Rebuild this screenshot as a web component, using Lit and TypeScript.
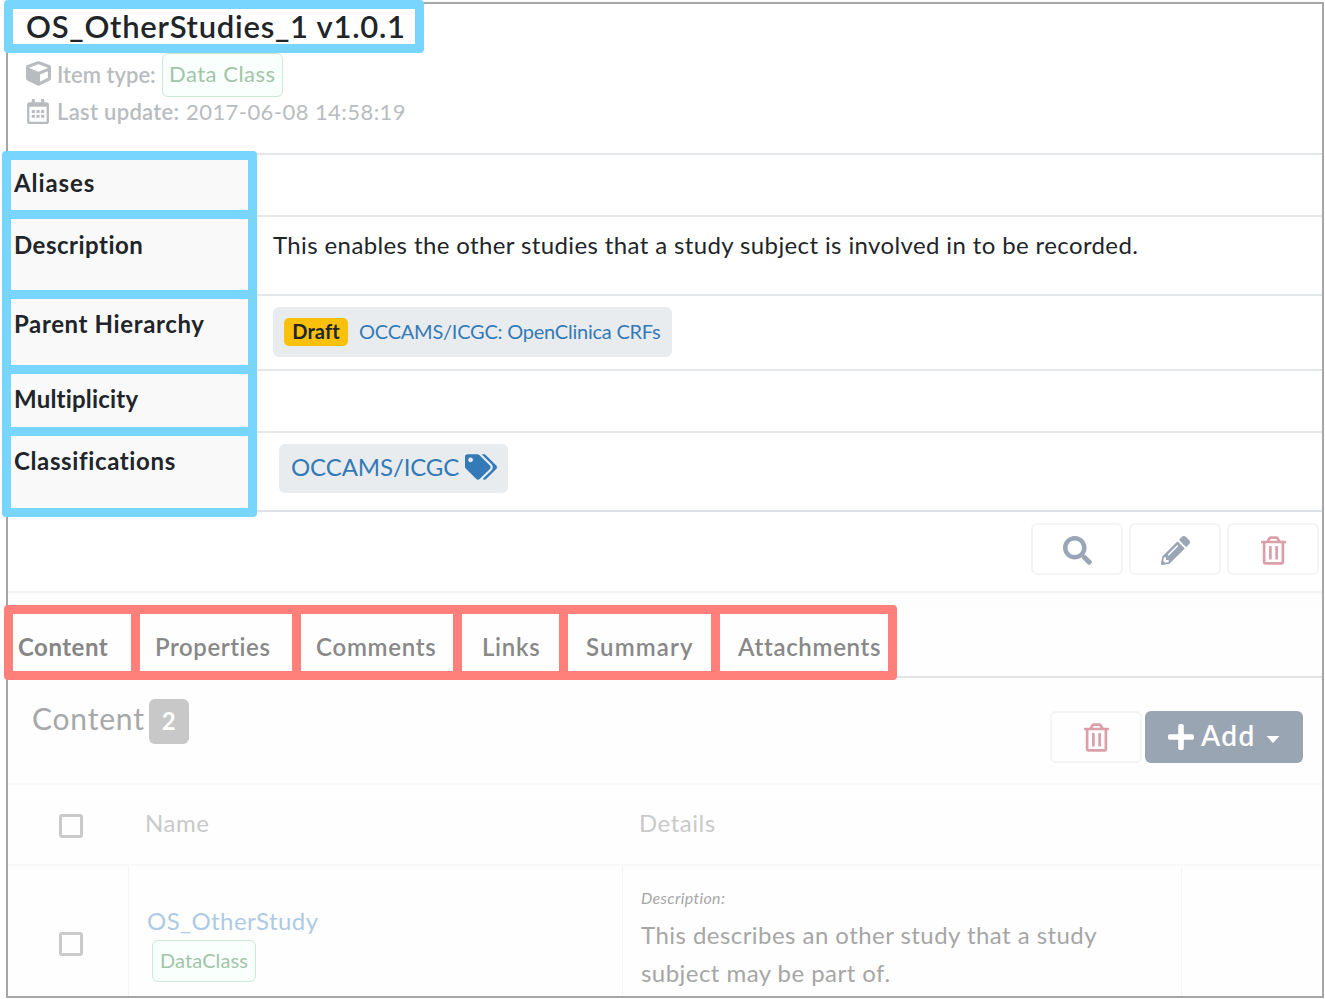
import { LitElement, html, css, svg } from "lit";
import { customElement, property } from "lit/decorators.js";

const ICONS: Record<string, { box: string; d: string }> = {
  search: { box: "0 0 512 512", d: "M505 442.7L405.3 343c-4.5-4.5-10.6-7-17-7H372c27.6-35.3 44-79.7 44-128C416 93.1 322.9 0 208 0S0 93.1 0 208s93.1 208 208 208c48.3 0 92.7-16.4 128-44v16.3c0 6.4 2.5 12.5 7 17l99.7 99.7c9.4 9.4 24.6 9.4 33.9 0l28.3-28.3c9.4-9.4 9.4-24.6.1-34zM208 336c-70.7 0-128-57.2-128-128 0-70.7 57.2-128 128-128 70.7 0 128 57.2 128 128 0 70.7-57.2 128-128 128z" },
  pencil: { box: "0 0 512 512", d: "M497.9 142.1l-46.1 46.1c-4.7 4.7-12.3 4.7-17 0l-111-111c-4.7-4.7-4.7-12.3 0-17l46.1-46.1c18.7-18.7 49.1-18.7 67.9 0l60.1 60.1c18.8 18.7 18.8 49.1 0 67.9zM284.2 99.8L21.6 362.4.4 483.9c-2.9 16.4 11.4 30.6 27.8 27.8l121.5-21.3 262.6-262.6c4.7-4.7 4.7-12.3 0-17l-111-111c-4.8-4.7-12.4-4.7-17.1 0zM124.1 339.9c-5.5-5.5-5.5-14.3 0-19.8l154-154c5.5-5.5 14.3-5.5 19.8 0s5.5 14.3 0 19.8l-154 154c-5.5 5.5-14.3 5.5-19.8 0zM88 424h48v36.3l-64.5 11.3-31.1-31.1L51.7 376H88v48z" },
  cube: { box: "0 0 512 512", d: "M239.1 6.3l-208 78c-18.7 7-31.1 25-31.1 45v225.1c0 18.2 10.3 34.8 26.5 42.9l208 104c13.5 6.8 29.4 6.8 42.9 0l208-104c16.3-8.1 26.5-24.8 26.5-42.9V129.3c0-20-12.4-37.9-31.1-44.9l-208-78C262 2.2 250 2.2 239.1 6.3zM256 68.4l192 72v1.1l-192 78-192-78v-1.1l192-72zm32 356V275.5l160-65v133.9l-160 80z" },
  calendar: { box: "0 0 448 512", d: "M448 112v352c0 26.5-21.5 48-48 48H48c-26.5 0-48-21.5-48-48V112c0-26.5 21.5-48 48-48h48V12c0-6.6 5.4-12 12-12h40c6.6 0 12 5.4 12 12v52h128V12c0-6.6 5.4-12 12-12h40c6.6 0 12 5.4 12 12v52h48c26.5 0 48 21.5 48 48zm-48 346V160H48v298c0 3.3 2.7 6 6 6h340c3.3 0 6-2.7 6-6zM96 224h64v64H96zM192 224h64v64h-64zM288 224h64v64h-64zM96 320h64v64H96zM192 320h64v64h-64zM288 320h64v64h-64z" },
  tags: { box: "0 0 640 512", d: "M497.941 225.941L286.059 14.059A48 48 0 0 0 252.118 0H48C21.49 0 0 21.49 0 48v204.118a48 48 0 0 0 14.059 33.941l211.882 211.882c18.744 18.745 49.136 18.746 67.882 0l204.118-204.118c18.745-18.745 18.745-49.137 0-67.882zM112 160c-26.51 0-48-21.49-48-48s21.49-48 48-48 48 21.49 48 48-21.49 48-48 48zm513.941 133.823L421.823 497.941c-18.745 18.745-49.137 18.745-67.882 0l-.36-.36L527.64 323.522c16.999-16.999 26.36-39.6 26.36-63.64s-9.362-46.641-26.36-63.64L331.397 0h48.721a48 48 0 0 1 33.941 14.059l211.882 211.882c18.745 18.745 18.745 49.137 0 67.882z" },
  plus: { box: "0 0 448 512", d: "M416 208H272V64c0-17.67-14.33-32-32-32h-32c-17.67 0-32 14.33-32 32v144H32c-17.67 0-32 14.33-32 32v32c0 17.67 14.33 32 32 32h144v144c0 17.67 14.33 32 32 32h32c17.67 0 32-14.33 32-32V304h144c17.67 0 32-14.33 32-32v-32c0-17.67-14.33-32-32-32z" },
  trash: { box: "0 0 448 512", d: "M268 416h24a12 12 0 0 0 12-12V188a12 12 0 0 0-12-12h-24a12 12 0 0 0-12 12v216a12 12 0 0 0 12 12zM432 80h-82.41l-34-56.7A48 48 0 0 0 274.41 0H173.59a48 48 0 0 0-41.16 23.3L98.41 80H16A16 16 0 0 0 0 96v16a16 16 0 0 0 16 16h16v336a48 48 0 0 0 48 48h288a48 48 0 0 0 48-48V128h16a16 16 0 0 0 16-16V96a16 16 0 0 0-16-16zM171.84 50.91A6 6 0 0 1 177 48h94a6 6 0 0 1 5.15 2.91L293.61 80H154.39zM368 464H80V128h288zm-212-48h24a12 12 0 0 0 12-12V188a12 12 0 0 0-12-12h-24a12 12 0 0 0-12 12v216a12 12 0 0 0 12 12z" },
  caret: { box: "0 0 14 7", d: "M.6 0h12.8L7.6 6.5q-.6.6-1.2 0z" },
};

@customElement("ui-icon")
class UiIcon extends LitElement {
  @property() name = "cube";
  static styles = css`
    :host { display: block; flex: none; }
    .glyph { display: block; width: 100%; height: 100%; fill: currentColor; }
  `;
  render() {
    const i = ICONS[this.name];
    return html`<svg class="glyph" viewBox=${i.box}>${svg`<path fill-rule="evenodd" d=${i.d}></path>`}</svg>`;
  }
}

@customElement("app-root")
class AppRoot extends LitElement {
  static styles = css`
    :host {
      display: block; position: relative; width: 1325px; height: 999px; overflow: hidden;
      background: #fff; color: #212529;
      font: 400 24px/30px Lato, "Open Sans", sans-serif;
      letter-spacing: 0.38px; font-variant-ligatures: none; white-space: nowrap;
    }
    * { box-sizing: border-box; }
    .frame { width: 1318px; height: 996px; margin: 2px 0 0 6px; border: 2px solid #a6a6a6; display: flex; flex-direction: column; overflow: hidden; }

    .head { height: 149px; padding: 2px 0 0 18px; color: #b9bcbf; flex: none; font-size: 22px; }
    .title { margin: 0; font-size: 31px; font-weight: 600; line-height: 40px; letter-spacing: 0.75px; color: #212529; }
    .meta { display: flex; align-items: center; height: 30px; }
    .meta.type { height: 44px; margin-top: 7px; }
    .meta .key { font-weight: 600; padding-bottom: 1px; letter-spacing: 0; width: 99px; }
    .meta .key.upd { letter-spacing: 0.3px; width: 122px; padding-bottom: 0; }
    .meta .date { margin-left: 7px; padding-bottom: 1px; letter-spacing: 0.44px; }
    .cube { width: 25px; height: 25px; margin: 0 6px 4px 0; }
    .cal { width: 22px; height: 25px; margin: 0 8px 2px 1px; }
    .chip { border: 1px solid #cbe9d5; border-radius: 6px; background: #f8fffc; color: #a3c4a9; }
    .chip.big { height: 44px; width: 121px; margin-left: 6px; padding: 5px 0 0 6px; letter-spacing: 0.5px; }
    .chip.small { height: 42px; width: 104px; margin: 4px 0 0 5px; padding: 4px 0 0 7px; font-size: 20px; letter-spacing: 0.12px; }

    .info { flex: none; border-bottom: 2px solid #dee2e6; height: 359px; display: grid; grid-template-columns: 240px 1fr; grid-template-rows: 62px 79px 75px 62px 79px; }
    .label { background: #f9f9f9; border-top: 2px solid #e4e7ea; padding: 13px 0 0 6px; font-weight: 700; letter-spacing: 0.5px; }
    .label.wide { letter-spacing: 0.63px; }
    .label.wider { letter-spacing: 0.9px; }
    .label.tight { letter-spacing: 0.2px; }
    .value { border-top: 2px solid #e4e7ea; padding: 13px 0 0 25px; }
    .link-card { display: flex; background: #e9ecef; border-radius: 6px; color: #337ab7; }
    .parent { width: 399px; height: 50px; margin-top: -2px; padding: 11px; font-size: 20px; letter-spacing: -0.23px; }
    .draft { width: 64px; height: 28px; border-radius: 5px; background: #fac10c; color: #212529; font-weight: 700; line-height: 27px; text-align: center; letter-spacing: 0.1px; margin-right: 11px; }
    .parent .to { line-height: 27px; }
    .classif { width: 229px; height: 49px; margin: -2px 0 0 6px; padding: 8px 0 0 12px; letter-spacing: -0.1px; }
    .tag { width: 32px; height: 26px; margin: 2px 0 0 6px; }

    .actions { height: 81px; flex: none; display: flex; justify-content: flex-end; gap: 6px; padding: 11px 3px 0 0; border-bottom: 2px solid #f2f2f2; }
    .btn { width: 92px; height: 52px; border: 2px solid #f4f4f4; border-radius: 6px; display: grid; place-items: center; color: #9aa5b5; padding-top: 2px; }
    .btn.danger { color: #dc9ea9; }
    .sq { width: 29px; height: 29px; }
    .bin { width: 25px; height: 29px; }

    .tabs { height: 85px; flex: none; display: flex; padding: 39px 0 0 0; border-bottom: 2px solid #e3e3e3; background: linear-gradient(#fcfcfc, #fefefe 20px); color: #888; font-weight: 600; }
    .tab { flex: none; padding-left: 16px; }
    .t0 { width: 131px; padding-left: 10px; font-weight: 700; color: #868686; letter-spacing: 0.5px; }
    .t1 { width: 161px; padding-left: 16px; letter-spacing: 0.58px; }
    .t2 { width: 161px; letter-spacing: 0.75px; }
    .t3 { width: 106px; padding-left: 21px; letter-spacing: 0.7px; }
    .t4 { width: 152px; padding-left: 19px; letter-spacing: 1.15px; }
    .t5 { padding-left: 19px; letter-spacing: 0.7px; }

    .content-bar { height: 105px; flex: none; display: flex; align-items: flex-start; padding: 21px 19px 0 24px; background: #fefefe; }
    .content-bar h2 { margin: 0; font-size: 30px; font-weight: 400; line-height: 38px; letter-spacing: 0.8px; color: #a6a8aa; width: 117px; }
    .count { width: 40px; height: 45px; border-radius: 6px; background: #c8c8c8; color: #fff; font-weight: 700; line-height: 43px; text-align: center; }
    .content-bar .danger { margin: 12px 3px 0 auto; padding-top: 1px; }
    .add { width: 158px; height: 52px; margin-top: 12px; border-radius: 6px; background: #9aa5b4; color: #fff; display: flex; padding: 8px 0 0 23px; font-size: 28px; font-weight: 600; letter-spacing: 1.4px; line-height: 32px; }
    .plus { width: 26px; height: 30px; margin: 3px 7px 0 0; }
    .caret { width: 14px; height: 7px; margin: 17px 0 0 10px; }

    .table { flex: 1; display: grid; grid-template-columns: 121px 494px 559px 1fr; grid-template-rows: 81px 1fr; background: #fefefe; border-top: 2px solid #f8f8f8; }
    .th { color: #c9c9c9; border-bottom: 2px solid #f8f8f8; padding: 23px 0 0 16px; letter-spacing: 0.5px; }
    .td { border-right: 1px solid #f4f4f4; color: #a6a6a6; padding: 40px 0 0 18px; }
    .td.last { border-right: 0; }
    .box { width: 24px; height: 24px; margin-left: 51px; border: 3px solid #cacaca; border-radius: 3px; }
    .th.c, .td.c { padding-left: 0; }
    .th.c { padding-top: 29px; }
    .td.c { padding-top: 66px; }
    .item { color: #adcae5; letter-spacing: 0.42px; }
    .td.desc { padding-top: 21px; line-height: 37.5px; letter-spacing: 0.45px; }
    .small-label { font-size: 16px; font-style: italic; line-height: 22px; letter-spacing: 0.33px; margin-bottom: 7px; }

    .mark { position: absolute; border: 9px solid #77d5fe; border-radius: 4px; }
    .mark-title { left: 4px; top: 0; width: 419.5px; height: 53px; }
    .mark-labels { left: 2px; top: 151px; width: 255px; height: 366px; display: grid; grid-template-rows: 50px 71px 66px 53px 72px; gap: 9px; }
    .mark-labels .cell { box-shadow: 0 9px 0 #77d5fe; }
    .mark-tabs { left: 4px; top: 605px; width: 893px; height: 75px; border-color: #ff7f7a; display: grid; grid-template-columns: 118px 152px 152px 97px 143px 168px; gap: 9px; }
    .mark-tabs .cell { box-shadow: 9px 0 0 #ff7f7a; }
    .mark .cell:last-child { box-shadow: none; }
  `;

  private tabs = ["Content", "Properties", "Comments", "Links", "Summary", "Attachments"];

  render() {
    return html`
      <div class="frame">
        <header class="head">
          <h1 class="title">OS_OtherStudies_1 v1.0.1</h1>
          <div class="meta type"><ui-icon class="cube" name="cube"></ui-icon><span class="key">Item type:</span><span class="chip big">Data Class</span></div>
          <div class="meta"><ui-icon class="cal" name="calendar"></ui-icon><span class="key upd">Last update:</span><span class="date">2017-06-08 14:58:19</span></div>
        </header>
        <section class="info">
          <div class="label wider">Aliases</div><div class="value"></div>
          <div class="label">Description</div><div class="value">This enables the other studies that a study subject is involved in to be recorded.</div>
          <div class="label wide">Parent Hierarchy</div>
          <div class="value"><div class="link-card parent"><span class="draft">Draft</span><span class="to">OCCAMS/ICGC: OpenClinica CRFs</span></div></div>
          <div class="label tight">Multiplicity</div><div class="value"></div>
          <div class="label wide">Classifications</div>
          <div class="value"><div class="link-card classif"><span>OCCAMS/ICGC</span><ui-icon class="tag" name="tags"></ui-icon></div></div>
        </section>
        <div class="actions">
          <div class="btn"><ui-icon class="sq" name="search"></ui-icon></div>
          <div class="btn"><ui-icon class="sq" name="pencil"></ui-icon></div>
          <div class="btn danger"><ui-icon class="bin" name="trash"></ui-icon></div>
        </div>
        <nav class="tabs">${this.tabs.map((t, i) => html`<span class="tab t${i}">${t}</span>`)}</nav>
        <div class="content-bar">
          <h2>Content</h2><span class="count">2</span>
          <div class="btn danger"><ui-icon class="bin" name="trash"></ui-icon></div>
          <div class="add"><ui-icon class="plus" name="plus"></ui-icon><span>Add</span><ui-icon class="caret" name="caret"></ui-icon></div>
        </div>
        <section class="table">
          <div class="th c"><div class="box"></div></div><div class="th">Name</div><div class="th">Details</div><div class="th"></div>
          <div class="td c"><div class="box"></div></div>
          <div class="td"><div class="item">OS_OtherStudy</div><div class="chip small">DataClass</div></div>
          <div class="td desc"><div class="small-label">Description:</div><div>This describes an other study that a study</div><div>subject may be part of.</div></div>
          <div class="td last"></div>
        </section>
      </div>
      <div class="mark mark-title"></div>
      <div class="mark mark-labels">${[0, 1, 2, 3, 4].map(() => html`<div class="cell"></div>`)}</div>
      <div class="mark mark-tabs">${this.tabs.map(() => html`<div class="cell"></div>`)}</div>
    `;
  }
}
